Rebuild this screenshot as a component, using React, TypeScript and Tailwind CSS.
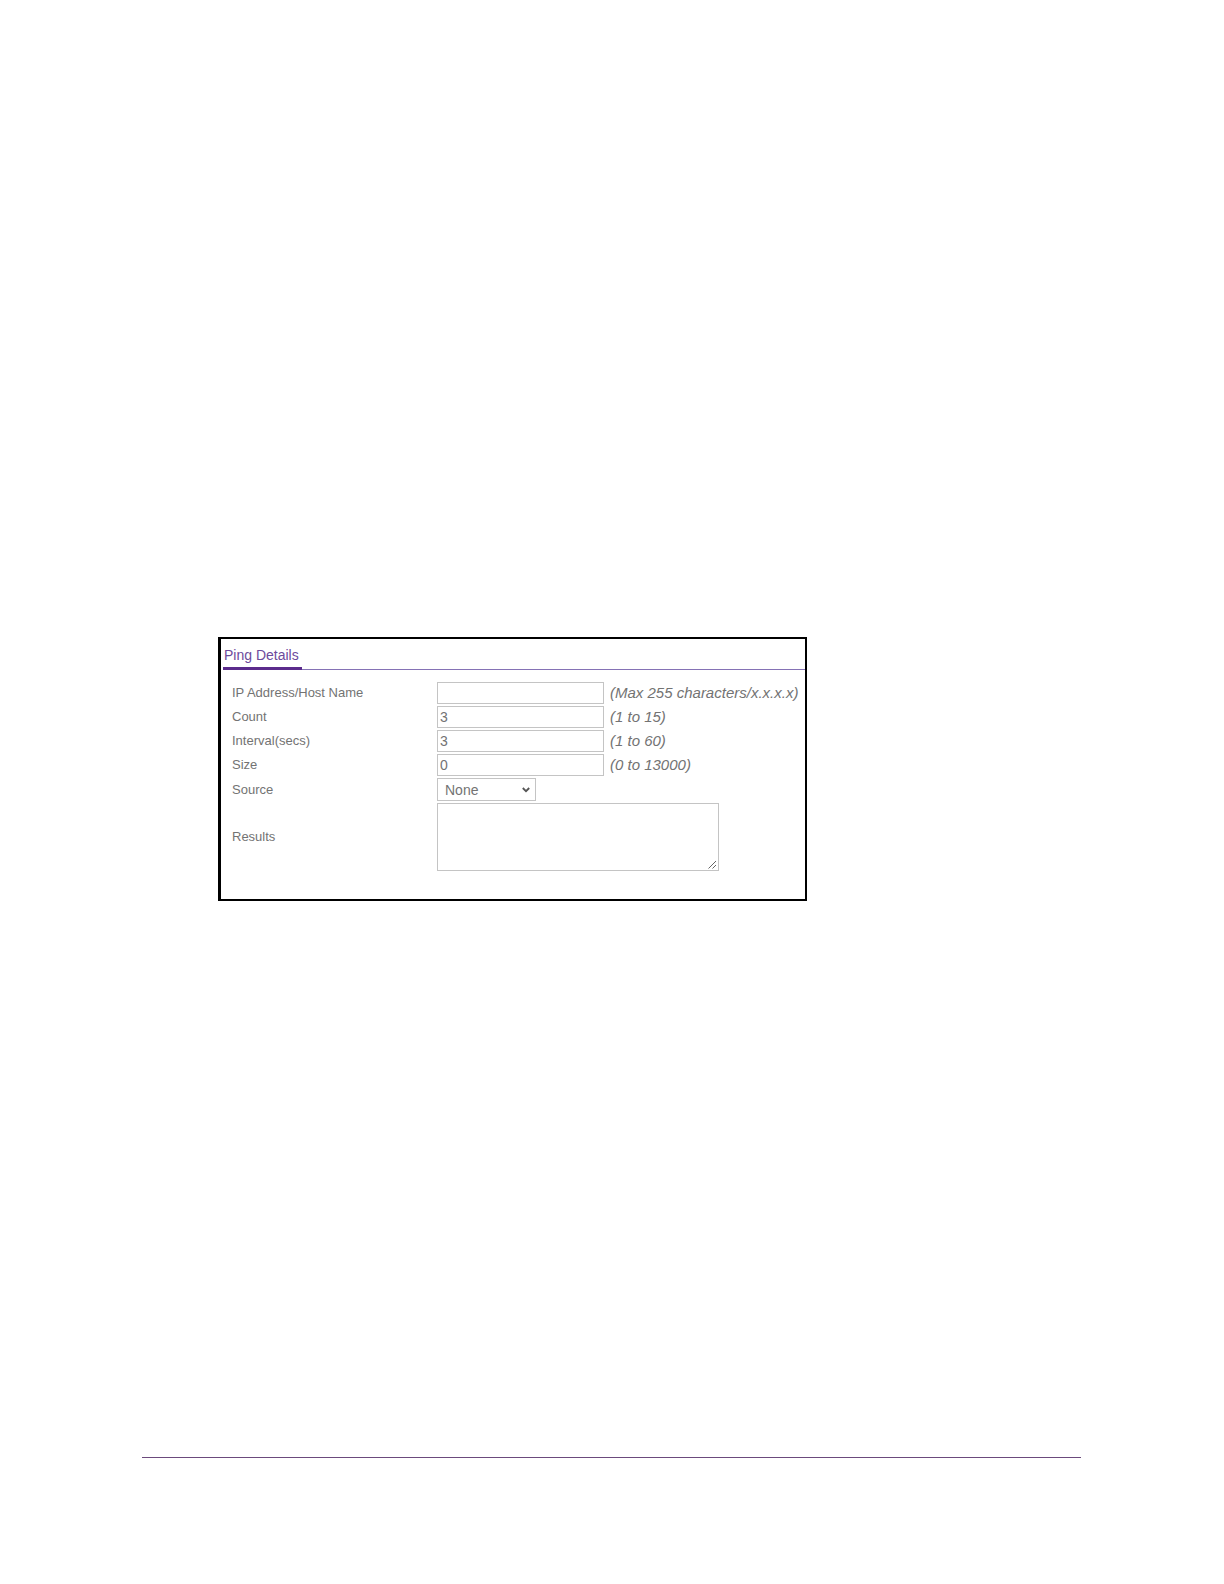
import { useState } from "react";

const fields = [
  { id: "host", label: "IP Address/Host Name", value: "", hint: "(Max 255 characters/x.x.x.x)" },
  { id: "count", label: "Count", value: "3", hint: "(1 to 15)" },
  { id: "interval", label: "Interval(secs)", value: "3", hint: "(1 to 60)" },
  { id: "size", label: "Size", value: "0", hint: "(0 to 13000)" },
];

function PingDetails() {
  const [source, setSource] = useState("None");

  return (
    <section className="w-full max-w-[589px] border-2 border-l-3 border-black pb-7">
      <div className="ml-[2px] flex border-b border-[#8572b5]">
        <h2 className="-mb-px border-b-3 border-[#5b2b8c] px-px pt-2 pb-1 text-[14px] leading-[16px] text-[#6d4a9c]">
          <span className="pr-[2px]">Ping Details</span>
        </h2>
      </div>

      <form className="flex flex-col gap-[2px] pt-3 pl-[11px] text-[13px] text-[#737373]">
        {fields.map((field) => (
          <div key={field.id} className="flex items-center">
            <label htmlFor={field.id} className="w-[205px] shrink-0">
              {field.label}
            </label>
            <input
              id={field.id}
              type="text"
              defaultValue={field.value}
              className="h-[22px] w-[167px] min-w-0 border border-[#c4c4c4] bg-white px-[2px] text-[14px]"
            />
            <span className="ml-[6px] text-[15px] leading-[22px] whitespace-nowrap italic">{field.hint}</span>
          </div>
        ))}

        <div className="flex items-center">
          <label htmlFor="source" className="w-[205px] shrink-0">
            Source
          </label>
          <div className="relative">
            <select
              id="source"
              value={source}
              onChange={(e) => setSource(e.target.value)}
              className="block h-[23px] w-[99px] appearance-none border border-[#c4c4c4] bg-white px-[7px] text-[14px] leading-[20px]"
            >
              <option>None</option>
            </select>
            <svg
              viewBox="0 0 8 6"
              className="pointer-events-none absolute top-[9px] right-[6px] h-[6px] w-2"
              fill="none"
              stroke="#555"
              strokeWidth="1.8"
            >
              <path d="M0.8 1 L4 4.2 L7.2 1" />
            </svg>
          </div>
        </div>

        <div className="flex items-center">
          <label htmlFor="results" className="w-[205px] shrink-0">
            Results
          </label>
          <div className="relative">
            <textarea
              id="results"
              className="block h-[68px] w-[282px] resize-none border border-[#c4c4c4] bg-white p-[2px]"
            />
            <svg
              viewBox="0 0 9 9"
              className="pointer-events-none absolute right-[2px] bottom-[2px] size-[9px]"
              fill="none"
              stroke="#666"
            >
              <path d="M0.5 8.5 L8 1 M4.5 8.5 L8 5" />
            </svg>
          </div>
        </div>
      </form>
    </section>
  );
}

export default function App() {
  return (
    <main className="flex min-h-screen flex-col bg-white pr-[143px] pl-[142px] pt-[637px] font-['Liberation_Sans',Arial,sans-serif]">
      <div className="pl-[76px]">
        <PingDetails />
      </div>
      <footer className="mt-auto mb-[126px] border-t border-[#6b4a7c]" />
    </main>
  );
}
